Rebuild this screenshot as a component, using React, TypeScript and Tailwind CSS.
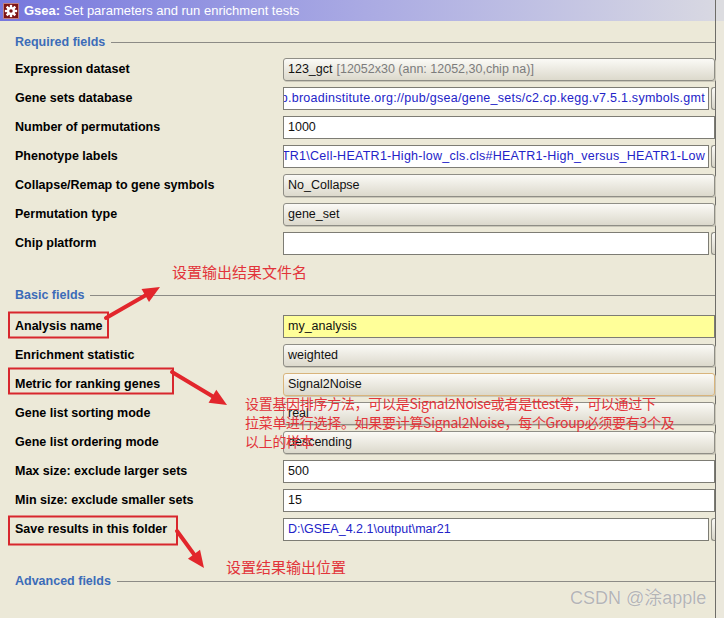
import React from "react";

type FieldProps = {
  kind?: "text" | "combo";
  blue?: boolean;
  yellow?: boolean;
  focused?: boolean;
  button?: boolean;
  alignEnd?: boolean;
  children?: React.ReactNode;
};

function Field({ kind = "text", blue, yellow, focused, button, alignEnd, children }: FieldProps) {
  if (kind === "combo") {
    return (
      <div
        className={
          "flex-1 h-[23px] rounded-[3px] border bg-linear-to-b from-[#fbfaf6] to-[#dcd9cc] flex items-center px-[4px] overflow-hidden whitespace-nowrap text-[12.5px] text-[#111] shadow-[1px_1px_0_#c9c6b8] " +
          (focused ? "border-[#d8b47c]" : "border-[#8f8e86]")
        }
      >
        {children}
      </div>
    );
  }
  return (
    <div className="flex-1 flex h-[23px] overflow-hidden">
      <div
        className={
          "flex-1 min-w-0 h-[23px] border border-[#7d7c74] flex items-center overflow-hidden whitespace-nowrap text-[12.5px] " +
          (yellow ? "bg-[#ffff99] " : "bg-white ") +
          (blue ? "text-[#2323c8] " : "text-[#111] ") +
          (alignEnd ? "justify-end pr-[3px] tracking-[0.27px] " : "pl-[4px] ")
        }
      >
        <span className="shrink-0">{children}</span>
      </div>
      {button && (
        <div className="ml-[2px] w-[4px] h-[23px] shrink-0 rounded-l-[3px] border border-r-0 border-[#8f8e86] bg-linear-to-b from-[#fbfaf6] to-[#d6d3c6]" />
      )}
    </div>
  );
}

function Row({ label, children }: { label: string; children: React.ReactNode }) {
  return (
    <div className="flex items-center h-[23px]">
      <div className="w-[283px] shrink-0 pl-[15px] font-bold text-[12.5px] text-black whitespace-nowrap">{label}</div>
      {children}
    </div>
  );
}

function Section({ title }: { title: string }) {
  return (
    <div className="flex items-center h-[18px] pl-[15px]">
      <span className="font-bold text-[12.5px] text-[#3c6cb8] whitespace-nowrap">{title}</span>
      <div className="flex-1 ml-[6px] h-px bg-[#8c8b86]" />
    </div>
  );
}

function arrow(x1: number, y1: number, x2: number, y2: number, headLen = 17, headW = 15) {
  const dx = x2 - x1;
  const dy = y2 - y1;
  const len = Math.sqrt(dx * dx + dy * dy);
  const ux = dx / len;
  const uy = dy / len;
  const bx = x2 - ux * headLen;
  const by = y2 - uy * headLen;
  const px = -uy * (headW / 2);
  const py = ux * (headW / 2);
  return (
    <g key={`${x1}-${y1}`}>
      <line x1={x1} y1={y1} x2={bx + ux * 2} y2={by + uy * 2} stroke="#e2262c" strokeWidth={4} strokeLinecap="round" />
      <polygon points={`${x2},${y2} ${bx + px},${by + py} ${bx - px},${by - py}`} fill="#e2262c" />
    </g>
  );
}

export default function App() {
  const cjk = "font-['Noto_Sans_CJK_SC','Noto_Sans',sans-serif]";
  return (
    <div className="relative w-[724px] h-[618px] overflow-hidden bg-[#ece9d8] flex font-['Liberation_Sans',Arial,sans-serif]">
      <div className="w-[716px] shrink-0 flex flex-col border-r border-[#6e6d68]">
        {/* Title bar */}
        <div className="h-[21px] shrink-0 flex items-center pl-[3px] gap-[5px] bg-linear-to-r from-[#7777dd] via-[#a9a9e3] to-[#d8d8e2]">
          <div className="w-[16px] h-[16px] bg-[#7d1414] border border-[#c08080] flex items-center justify-center">
            <svg width="14" height="14" viewBox="0 0 24 24">
              <g fill="#ffffff">
                <circle cx="12" cy="12" r="7" />
                {[0, 45, 90, 135, 180, 225, 270, 315].map((a) => (
                  <rect key={a} x="10" y="1.5" width="4" height="6" transform={`rotate(${a} 12 12)`} />
                ))}
              </g>
              <circle cx="12" cy="12" r="3" fill="#7d1414" />
            </svg>
          </div>
          <span className="text-[13px] text-white whitespace-nowrap">
            <span className="font-bold">Gsea:</span> Set parameters and run enrichment tests
          </span>
        </div>

        <div className="pt-[12px]">
          <Section title="Required fields" />
        </div>
        <div className="mt-[7px] flex flex-col gap-[6px]">
          <Row label="Expression dataset">
            <Field kind="combo">
              <span>123_gct</span>
              <span className="ml-[4px] text-[#7c7c7c]">[12052x30 (ann: 12052,30,chip na)]</span>
            </Field>
          </Row>
          <Row label="Gene sets database">
            <Field blue button alignEnd>
              ftp.broadinstitute.org://pub/gsea/gene_sets/c2.cp.kegg.v7.5.1.symbols.gmt
            </Field>
          </Row>
          <Row label="Number of permutations">
            <Field>1000</Field>
          </Row>
          <Row label="Phenotype labels">
            <Field blue button alignEnd>
              D:\GSEA\HEATR1\Cell-HEATR1-High-low_cls.cls#HEATR1-High_versus_HEATR1-Low
            </Field>
          </Row>
          <Row label="Collapse/Remap to gene symbols">
            <Field kind="combo">No_Collapse</Field>
          </Row>
          <Row label="Permutation type">
            <Field kind="combo">gene_set</Field>
          </Row>
          <Row label="Chip platform">
            <Field button>{""}</Field>
          </Row>
        </div>

        <div className="mt-[31px]">
          <Section title="Basic fields" />
        </div>
        <div className="mt-[11px] flex flex-col gap-[6px]">
          <Row label="Analysis name">
            <Field yellow>my_analysis</Field>
          </Row>
          <Row label="Enrichment statistic">
            <Field kind="combo">weighted</Field>
          </Row>
          <Row label="Metric for ranking genes">
            <Field kind="combo" focused>
              Signal2Noise
            </Field>
          </Row>
          <Row label="Gene list sorting mode">
            <Field kind="combo">real</Field>
          </Row>
          <Row label="Gene list ordering mode">
            <Field kind="combo">descending</Field>
          </Row>
          <Row label="Max size: exclude larger sets">
            <Field>500</Field>
          </Row>
          <Row label="Min size: exclude smaller sets">
            <Field>15</Field>
          </Row>
          <Row label="Save results in this folder">
            <Field blue button>
              D:\GSEA_4.2.1\output\mar21
            </Field>
          </Row>
        </div>

        <div className="mt-[31px]">
          <Section title="Advanced fields" />
        </div>
      </div>
      <div className="flex-1 flex flex-col">
        <div className="h-[21px] bg-[#dcdce0]" />
        <div className="flex-1 bg-[#ebe8dc]" />
      </div>

      {/* Annotation overlay: red boxes and arrows */}
      <svg className="absolute left-0 top-0 pointer-events-none" width="724" height="618">
        <rect x="9" y="312.5" width="99" height="25" fill="none" stroke="#d8272d" strokeWidth="2" />
        <rect x="9" y="368.5" width="164" height="25" fill="none" stroke="#d8272d" strokeWidth="2" />
        <rect x="9" y="516.5" width="168" height="28" fill="none" stroke="#d8272d" strokeWidth="2" />
        {arrow(106, 318, 160, 287)}
        {arrow(172, 372, 227, 405)}
        {arrow(177, 531, 204, 568)}
      </svg>

      <div className={`absolute left-[172px] top-[262px] text-[15px] leading-[20px] text-[#e2343a] whitespace-nowrap ${cjk}`}>
        设置输出结果文件名
      </div>
      <div className={`absolute left-[245px] top-[394px] text-[14px] leading-[19px] tracking-[-0.3px] text-[#e2343a] whitespace-nowrap ${cjk}`}>
        <div>设置基因排序方法，可以是Signal2Noise或者是ttest等，可以通过下</div>
        <div>拉菜单进行选择。如果要计算Signal2Noise，每个Group必须要有3个及</div>
        <div>以上的样本</div>
      </div>
      <div className={`absolute left-[226px] top-[557px] text-[15px] leading-[20px] text-[#e2343a] whitespace-nowrap ${cjk}`}>
        设置结果输出位置
      </div>

      <div className="absolute left-[570px] top-[587px] text-[18px] leading-[22px] text-[#b5b5b5] whitespace-nowrap font-['Liberation_Sans','Noto_Sans_CJK_SC',sans-serif] [text-shadow:0_0_1px_#ffffff]">
        CSDN @涂apple
      </div>
    </div>
  );
}
